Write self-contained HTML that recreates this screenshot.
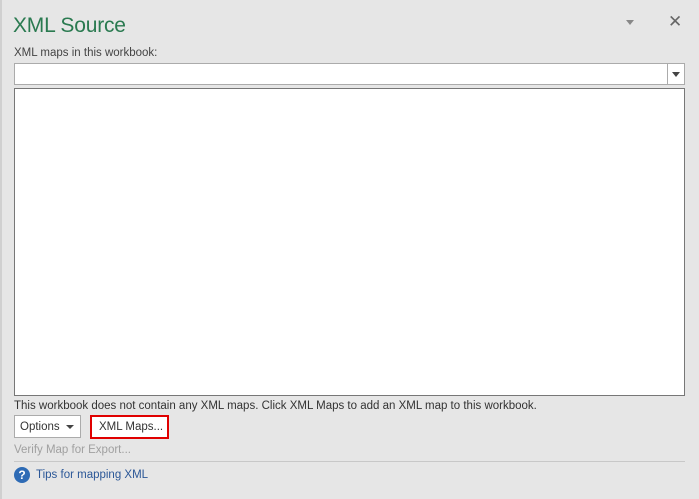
<!DOCTYPE html>
<html><head><style>
body{margin:0;width:699px;height:499px;background:#e6e6e6;font-family:"Liberation Sans",sans-serif;position:relative;overflow:hidden;font-size:11.5px;color:#444}
.a{position:absolute}
</style></head><body>
<div class="a" style="left:0;top:0;width:2px;height:499px;background:#d0d0d0"></div>
<div class="a" style="left:13px;top:14px;font-size:21px;color:#2a7a50;letter-spacing:-0.2px">XML Source</div>
<div class="a" style="left:626px;top:20px;width:0;height:0;border-left:4px solid transparent;border-right:4px solid transparent;border-top:5px solid #888"></div>
<div class="a" style="left:668px;top:12px;font-size:17px;color:#666">✕</div>
<div class="a" style="left:14px;top:47px;color:#444">XML maps in this workbook:</div>
<div class="a" style="left:14px;top:63px;width:669px;height:20px;background:#fff;border:1px solid #ababab"></div>
<div class="a" style="left:667px;top:64px;width:1px;height:20px;background:#ababab"></div>
<div class="a" style="left:672px;top:72px;width:0;height:0;border-left:4px solid transparent;border-right:4px solid transparent;border-top:5px solid #444"></div>
<div class="a" style="left:14px;top:88px;width:669px;height:306px;background:#fff;border:1px solid #777"></div>
<div class="a" style="left:14px;top:400px;color:#333">This workbook does not contain any XML maps. Click XML Maps to add an XML map to this workbook.</div>
<div class="a" style="left:14px;top:415px;width:65px;height:21px;background:#fff;border:1px solid #ababab"></div>
<div class="a" style="left:20px;top:421px;color:#333">Options</div>
<div class="a" style="left:66px;top:425px;width:0;height:0;border-left:4px solid transparent;border-right:4px solid transparent;border-top:4px solid #444"></div>
<div class="a" style="left:90px;top:415px;width:75px;height:20px;background:#fff;border:2px solid #e00000"></div>
<div class="a" style="left:99px;top:421px;color:#333">XML Maps...</div>
<div class="a" style="left:14px;top:444px;color:#a0a0a0">Verify Map for Export...</div>
<div class="a" style="left:14px;top:461px;width:671px;height:1px;background:#c8c8c8"></div>
<div class="a" style="left:14px;top:467px;width:16px;height:16px;border-radius:50%;background:#2e6bb5;color:#fff;font-weight:bold;font-size:12px;text-align:center;line-height:16px">?</div>
<div class="a" style="left:36px;top:469px;color:#2b5797">Tips for mapping XML</div>
</body></html>
